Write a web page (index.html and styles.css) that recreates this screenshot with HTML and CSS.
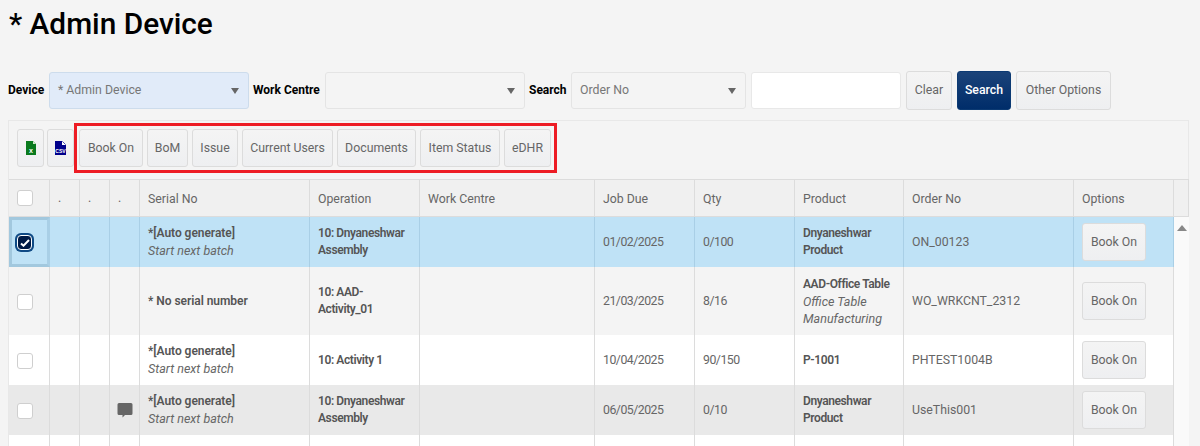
FILE: index.html
```html
<!DOCTYPE html>
<html lang="en">
<head>
<meta charset="utf-8">
<title>Admin Device</title>
<link rel="stylesheet" href="styles.css">
</head>
<body>
<h1 class="title">* Admin Device</h1>
<form class="filters">
  <label class="lbl lbl-device">Device</label>
  <div class="select select-device selected-device"><span>* Admin Device</span><i class="caret"></i></div>
  <label class="lbl lbl-wc">Work Centre</label>
  <div class="select select-wc"><span></span><i class="caret"></i></div>
  <label class="lbl lbl-search">Search</label>
  <div class="select select-search"><span>Order No</span><i class="caret"></i></div>
  <div class="text-input"></div>
  <button type="button" class="btn btn-clear">Clear</button>
  <button type="button" class="btn btn-primary">Search</button>
  <button type="button" class="btn btn-other">Other Options</button>
</form>
<section class="panel">
  <div class="toolbar">
    <button type="button" class="btn icon-btn">
      <svg width="10" height="14" viewBox="0 0 10 14"><path d="M0 0h7l3 3v11H0z" fill="#0a7a1e"/><path d="M7 0l3 3H7z" fill="#cfe8c8"/><text x="5" y="12" font-size="7" font-weight="700" fill="#fff" text-anchor="middle" font-family="Liberation Sans">x</text></svg>
    </button>
    <button type="button" class="btn icon-btn">
      <svg width="11" height="14" viewBox="0 0 11 14"><path d="M0 0h7l4 4v10H0z" fill="#00008b"/><path d="M7 0l4 4H7z" fill="#fff"/><path d="M7.500 0.500l3 3" stroke="#00008b" stroke-width=".6"/><text x="5.500" y="12" font-size="5" font-weight="700" fill="#fff" text-anchor="middle" font-family="Liberation Sans">CSV</text></svg>
    </button>
    <button type="button" class="btn act act-book">Book On</button>
    <button type="button" class="btn act act-bom">BoM</button>
    <button type="button" class="btn act act-issue">Issue</button>
    <button type="button" class="btn act act-users">Current Users</button>
    <button type="button" class="btn act act-docs">Documents</button>
    <button type="button" class="btn act act-status">Item Status</button>
    <button type="button" class="btn act act-edhr">eDHR</button>
    <div class="highlight"></div>
  </div>
  <div class="grid head">
    <div class="cell"><span class="check"></span></div>
    <div class="cell dot">.</div><div class="cell dot">.</div><div class="cell dot">.</div>
    <div class="cell pad">Serial No</div>
    <div class="cell pad">Operation</div>
    <div class="cell pad">Work Centre</div>
    <div class="cell pad">Job Due</div>
    <div class="cell pad">Qty</div>
    <div class="cell pad">Product</div>
    <div class="cell pad">Order No</div>
    <div class="cell pad">Options</div>
    <div class="cell end"></div>
  </div>
  <div class="body">
    <div class="rows">
      <div class="grid row r-sel">
        <div class="cell cell-focus"><span class="check checked"><svg width="10" height="8" viewBox="0 0 10 8"><path d="M1 4.500l2.500 2.200L9 1" fill="none" stroke="#fff" stroke-width="2"/></svg></span></div>
        <div class="cell"></div><div class="cell"></div><div class="cell"></div>
        <div class="cell pad"><b>*[Auto generate]</b><em>Start next batch</em></div>
        <div class="cell pad"><b class="tight">10: Dnyaneshwar Assembly</b></div>
        <div class="cell pad"></div>
        <div class="cell pad num">01/02/2025</div>
        <div class="cell pad num">0/100</div>
        <div class="cell pad"><b class="tight">Dnyaneshwar Product</b></div>
        <div class="cell pad">ON_00123</div>
        <div class="cell pad"><button type="button" class="btn">Book On</button></div>
      </div>
      <div class="grid row r-alt r-tall">
        <div class="cell"><span class="check"></span></div>
        <div class="cell"></div><div class="cell"></div><div class="cell"></div>
        <div class="cell pad"><b>* No serial number</b></div>
        <div class="cell pad"><b class="tight">10: AAD-Activity_01</b></div>
        <div class="cell pad"></div>
        <div class="cell pad num">21/03/2025</div>
        <div class="cell pad num">8/16</div>
        <div class="cell pad"><b class="tight">AAD-Office Table</b><em>Office Table Manufacturing</em></div>
        <div class="cell pad">WO_WRKCNT_2312</div>
        <div class="cell pad"><button type="button" class="btn">Book On</button></div>
      </div>
      <div class="grid row r-white">
        <div class="cell"><span class="check"></span></div>
        <div class="cell"></div><div class="cell"></div><div class="cell"></div>
        <div class="cell pad"><b>*[Auto generate]</b><em>Start next batch</em></div>
        <div class="cell pad"><b class="tight">10: Activity 1</b></div>
        <div class="cell pad"></div>
        <div class="cell pad num">10/04/2025</div>
        <div class="cell pad num">90/150</div>
        <div class="cell pad"><b class="tight">P-1001</b></div>
        <div class="cell pad">PHTEST1004B</div>
        <div class="cell pad"><button type="button" class="btn">Book On</button></div>
      </div>
      <div class="grid row r-grey">
        <div class="cell"><span class="check"></span></div>
        <div class="cell"></div><div class="cell"></div>
        <div class="cell"><svg class="bubble" width="16" height="16" viewBox="0 0 16 16"><path d="M2 1h12a1.500 1.500 0 0 1 1.500 1.500v9A1.500 1.500 0 0 1 14 13H8l-2.500 2.500V13H2a1.500 1.500 0 0 1-1.500-1.500v-9A1.500 1.500 0 0 1 2 1z" fill="#666"/></svg></div>
        <div class="cell pad"><b>*[Auto generate]</b><em>Start next batch</em></div>
        <div class="cell pad"><b class="tight">10: Dnyaneshwar Assembly</b></div>
        <div class="cell pad"></div>
        <div class="cell pad num">06/05/2025</div>
        <div class="cell pad num">0/10</div>
        <div class="cell pad"><b class="tight">Dnyaneshwar Product</b></div>
        <div class="cell pad">UseThis001</div>
        <div class="cell pad"><button type="button" class="btn">Book On</button></div>
      </div>
      <div class="grid row r-white r-last">
        <div class="cell"></div><div class="cell"></div><div class="cell"></div><div class="cell"></div>
        <div class="cell"></div><div class="cell"></div><div class="cell"></div><div class="cell"></div>
        <div class="cell"></div><div class="cell"></div><div class="cell"></div><div class="cell"></div>
      </div>
    </div>
    <div class="scrollbar"><i class="arrow"></i></div>
  </div>
</section>
</body>
</html>
```
FILE: styles.css
```css
* { box-sizing: border-box; }
html, body { height: 100%; }
body {
  margin: 0;
  height: 446px;
  overflow: hidden;
  background: #f4f4f4;
  font-family: Roboto, "Noto Sans", sans-serif;
  font-size: 12.300px;
  color: #666;
}
.title {
  margin: 0;
  padding: 4px 0 0 9px;
  height: 72px;
  font-size: 29.800px;
  line-height: 40px;
  font-weight: 500;
  color: #000;
}
.filters {
  display: flex;
  align-items: flex-start;
  height: 48px;
  padding-left: 8px;
}
.lbl {
  font-size: 12px;
  font-weight: 700;
  color: #000;
  line-height: 36px;
}
.lbl-device { width: 41px; }
.lbl-wc { width: 72px; }
.lbl-search { width: 42px; }
.select {
  height: 37px;
  border: 1px solid #e4e4e4;
  border-radius: 3px;
  background: #f4f4f4;
  display: flex;
  align-items: center;
  justify-content: space-between;
  padding: 0 8px;
  margin-right: 4px;
  line-height: 34px;
  color: #777;
}
.selected-device { background: #e1ebf9; border-color: #cddcec; }
.select-device { width: 200px; }
.select-wc { width: 200px; }
.select-search { width: 175px; margin-right: 5px; }
.select span { position: relative; top: -1px; }
.caret {
  width: 0; height: 0;
  margin-right: 1px;
  border-left: 4px solid transparent;
  border-right: 4px solid transparent;
  border-top: 6px solid #666;
}
.text-input {
  width: 150px;
  height: 37px;
  background: #fff;
  border: 1px solid #e8e8e8;
  border-radius: 3px;
  margin-right: 5px;
}
.btn {
  font-family: inherit;
  font-size: inherit;
  color: #666;
  height: 38px;
  padding: 0;
  border: 1px solid #dcdcdc;
  border-radius: 3px;
  background: linear-gradient(#f4f4f4, #eeeff1);
  white-space: nowrap;
}
.filters .btn { height: 39px; padding-bottom: 2px; margin-top: -1px; margin-right: 5px; }
.btn-clear { width: 46px; }
.btn-primary {
  width: 54px;
  background: linear-gradient(#1b4379, #002d6a);
  border-color: #0c3a73;
  color: #fff;
  font-weight: 500;
}
.btn-other { width: 95px; }
.panel { margin-left: 8px; width: 1181px; border-left: 1px solid #e8e8e8; }
.toolbar {
  position: relative;
  height: 59px;
  border-top: 1px solid #e8e8e8;
  border-right: 1px solid #e8e8e8;
  display: flex;
  gap: 4px;
  padding: 8px 8px 0;
}
.icon-btn {
  width: 27px;
  padding: 0;
  display: flex;
  align-items: center;
  justify-content: center;
}
.icon-btn + .icon-btn { margin-left: -1px; margin-right: 1px; }
.act-book { width: 64px; }
.act-bom { width: 41px; }
.act-issue { width: 46px; }
.act-users { width: 91px; }
.act-docs { width: 79px; }
.act-status { width: 80px; }
.act-edhr { width: 47px; }
.highlight {
  position: absolute;
  left: 65px;
  top: 2px;
  width: 483px;
  height: 50px;
  border: 3px solid #ed1c24;
  pointer-events: none;
}
.grid {
  display: grid;
  grid-template-columns: 41px 30px 30px 30px 170px 110px 175px 100px 100px 109px 170px 100px;
}
.head {
  grid-template-columns: 41px 30px 30px 30px 170px 110px 175px 100px 100px 109px 170px 100px 15px;
  height: 38px;
  background: #f0f0f0;
  border-top: 1px solid #dcdcdc;
  border-bottom: 1px solid #dcdcdc;
}
.cell {
  border-right: 1px solid #dcdcdc;
  display: flex;
  flex-direction: column;
  justify-content: center;
  min-width: 0;
  line-height: 17px;
}
.head .cell:first-child, .row .cell:first-child { padding-left: 8px; }
.pad { padding: 0 8px; }
.head .pad { padding-top: 2px; }
.dot { padding-left: 8px; }
.cell b { font-size: 12px; font-weight: 600; letter-spacing: -0.05px; color: #555; display: block; }
.cell b.tight { letter-spacing: -0.4px; }
.cell em { display: block; font-size: 12.500px; }
.num { letter-spacing: -0.5px; }
.check {
  display: flex;
  align-items: center;
  justify-content: center;
  width: 16px;
  height: 16px;
  background: #fff;
  border: 1px solid #cfcfcf;
  border-radius: 3px;
}
.checked {
  width: 15px;
  height: 15px;
  background: #001a45;
  border: 1px solid #fff;
  box-shadow: 0 0 0 2px #0f4a85;
  border-radius: 4px;
}
.body { display: flex; height: 229px; }
.rows { width: 1165px; flex: none; overflow: hidden; }
.row { height: 50px; }
.r-tall { height: 68px; }
.r-last { height: 11px; }
.r-sel { background: #bfe2f6; }
.r-sel .cell { border-right-color: #a9cfe6; }
.r-alt { background: #f4f4f4; }
.r-white { background: #fff; }
.r-grey { background: #e9e9e9; }
.cell-focus { border: 3px solid #a2c8de; padding-left: 5px !important; }
.row .btn { width: 64px; }
.row .cell:first-child .check { margin-top: 1px; }
.bubble { align-self: center; }
.scrollbar {
  flex: none;
  width: 15px;
  background: #fafafa;
  display: flex;
  justify-content: center;
  padding-top: 8px;
}
.arrow {
  width: 0; height: 0;
  border-left: 5px solid transparent;
  border-right: 5px solid transparent;
  border-bottom: 6px solid #888;
}
```
